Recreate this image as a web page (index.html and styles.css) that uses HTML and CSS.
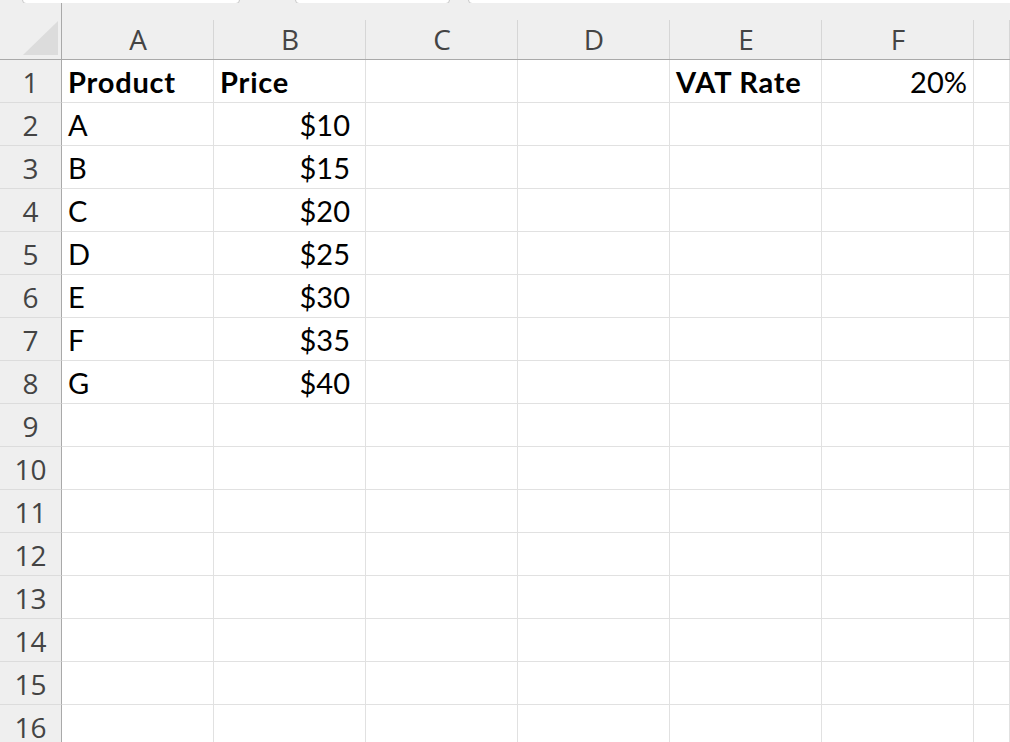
FILE: index.html
```html
<!DOCTYPE html>
<html lang="en">
<head>
    <meta charset="UTF-8">
    <title>VAT Rate - Sheet</title>
    <link rel="stylesheet" href="styles.css">
</head>
<body>
    <div class="topbar">
        <div class="box name-box"></div>
        <div class="box fx-box"></div>
        <div class="box formula-box"></div>
    </div>
    <div class="sheet" id="sheet"></div>
    <script>
        const cols = ['A', 'B', 'C', 'D', 'E', 'F', ''];
        const data = {
            1: [['Product', 'bold'], ['Price', 'bold'], null, null, ['VAT Rate', 'bold'], ['20%', 'num']],
            2: [['A'], ['$10', 'cur']],
            3: [['B'], ['$15', 'cur']],
            4: [['C'], ['$20', 'cur']],
            5: [['D'], ['$25', 'cur']],
            6: [['E'], ['$30', 'cur']],
            7: [['F'], ['$35', 'cur']],
            8: [['G'], ['$40', 'cur']]
        };
        const sheet = document.getElementById('sheet');
        let html = '<div class="corner"><span class="tri"></span></div>';
        cols.forEach(c => { html += `<div class="col-head">${c}</div>`; });
        for (let r = 1; r <= 16; r++) {
            html += `<div class="row-head">${r}</div>`;
            const row = data[r] || [];
            cols.forEach((c, i) => {
                const cell = row[i];
                if (cell) {
                    html += `<div class="cell ${cell[1] || ''}">${cell[0]}</div>`;
                } else {
                    html += '<div class="cell"></div>';
                }
            });
        }
        sheet.innerHTML = html;
    </script>
</body>
</html>
```

FILE: styles.css
```css
body {
    margin: 0;
    background-color: #fff;
    overflow: hidden;
    font-family: Lato, "Open Sans", sans-serif;
}
.topbar {
    height: 3px;
    background-color: #efefef;
    display: flex;
    overflow: hidden;
}
.box {
    height: 2px;
    margin-top: -10px;
    padding-top: 10px;
    background-color: #fff;
    border: 1px solid #c8c8c8;
    border-radius: 4px;
}
.name-box {
    margin-left: 22px;
    width: 216px;
}
.fx-box {
    margin-left: 55px;
    width: 153px;
}
.formula-box {
    margin-left: 18px;
    flex: 1;
    margin-right: -6px;
}
.sheet {
    display: grid;
    grid-template-columns: 62px repeat(6, 152px) 1fr;
    grid-template-rows: 57px;
    grid-auto-rows: 43px;
}
.corner {
    background-color: #efefef;
    border-right: 1px solid #a9a9a9;
    border-bottom: 1px solid #a9a9a9;
    display: flex;
    align-items: flex-end;
    justify-content: flex-end;
    padding: 0 3px 4px 0;
}
.tri {
    width: 0;
    height: 0;
    border-left: 35px solid transparent;
    border-bottom: 34px solid #dcdcdc;
}
.col-head {
    background: linear-gradient(#d6d6d6, #d6d6d6) right bottom / 1px calc(100% - 17px) no-repeat, #efefef;
    border-bottom: 1px solid #a9a9a9;
    color: #444;
    font-family: "Open Sans", sans-serif;
    font-size: 28px;
    display: flex;
    align-items: flex-end;
    justify-content: center;
    line-height: 1;
    padding-bottom: 6px;
}
.row-head {
    background-color: #efefef;
    border-right: 1px solid #a9a9a9;
    border-bottom: 1px solid #dcdcdc;
    color: #444;
    font-family: "Open Sans", sans-serif;
    font-size: 28px;
    display: flex;
    align-items: flex-end;
    justify-content: center;
    line-height: 1;
    padding-bottom: 6px;
    box-sizing: border-box;
}
.cell {
    border-right: 1px solid #e1e1e1;
    border-bottom: 1px solid #e1e1e1;
    color: #000;
    font-size: 29px;
    display: flex;
    align-items: flex-end;
    line-height: 1;
    padding: 0 6px 6px 6px;
    overflow: hidden;
    white-space: nowrap;
    box-sizing: border-box;
}
.cell.bold {
    font-weight: bold;
    letter-spacing: 0.8px;
}
.cell.num {
    justify-content: flex-end;
}
.cell.cur {
    justify-content: flex-end;
    padding-right: 15px;
}
```
